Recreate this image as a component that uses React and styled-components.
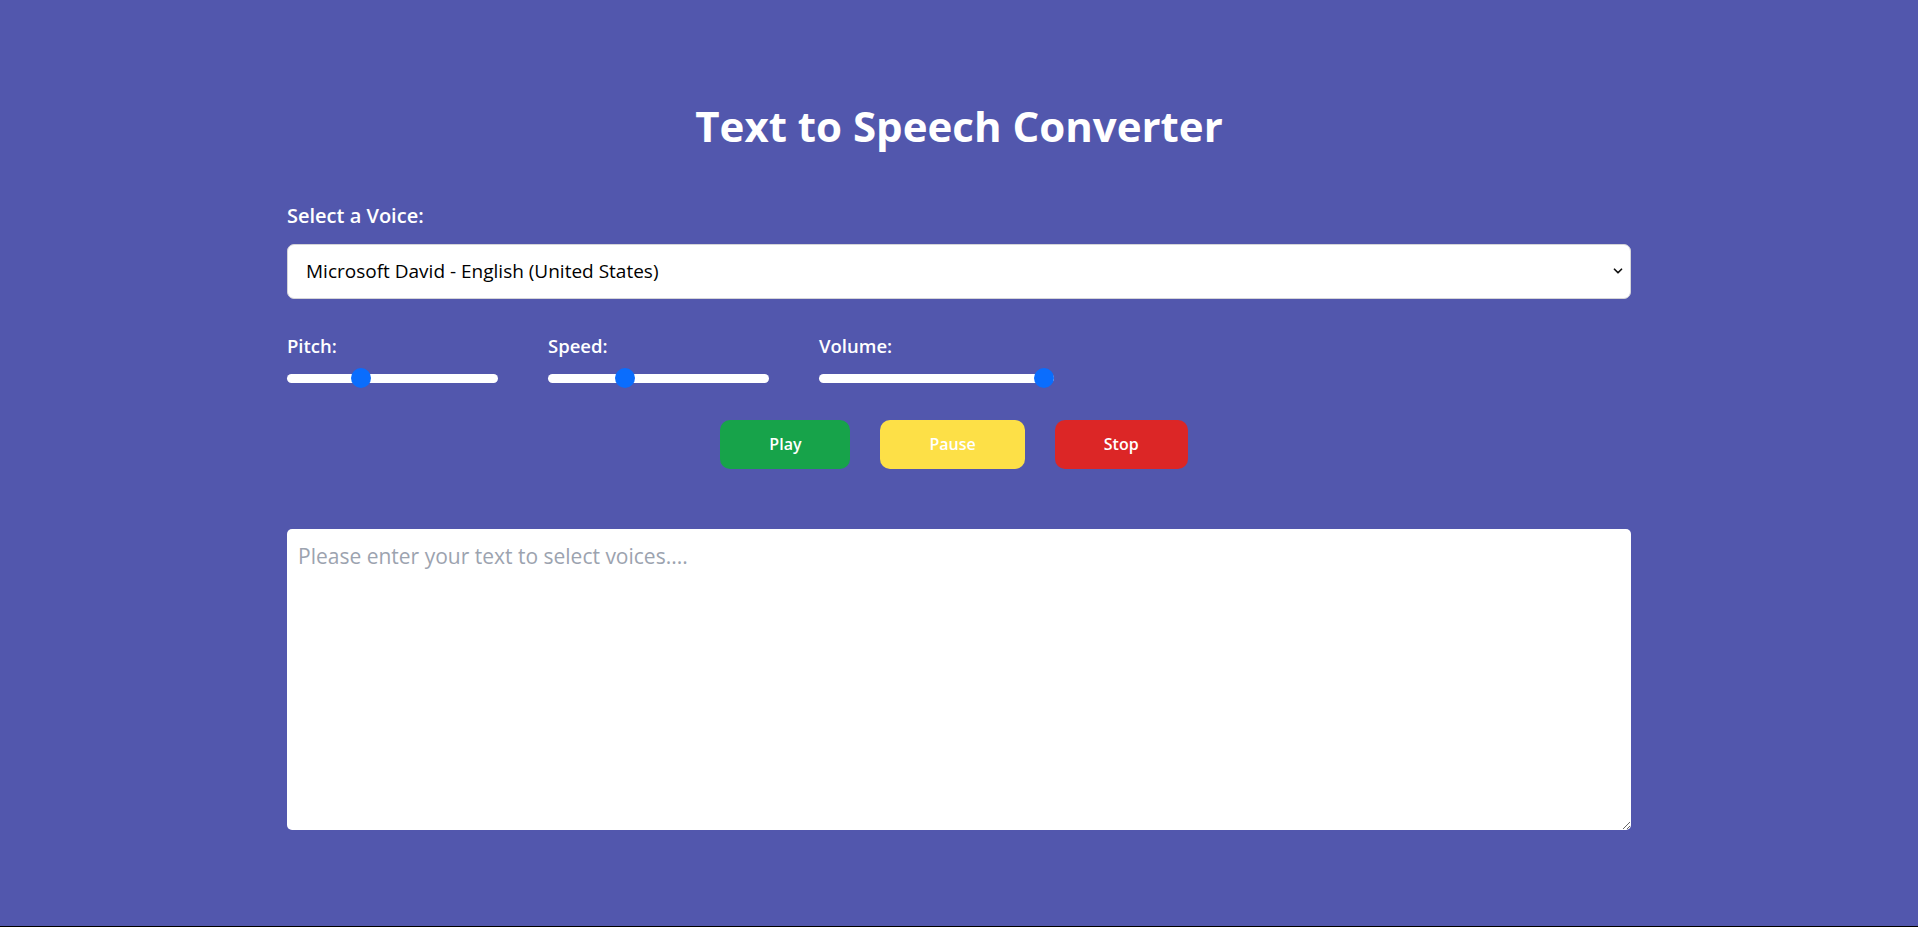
import React, { useState } from "react";
import styled, { createGlobalStyle } from "styled-components";
import { ChevronDown } from "lucide-react";

const GlobalStyle = createGlobalStyle`
  html {
    background: #000;
  }
  body {
    margin: 0;
    font-family: "Open Sans", "Noto Sans", sans-serif;
  }
  * {
    box-sizing: border-box;
  }
`;

const Page = styled.div`
  min-height: calc(100vh - 1px);
  background: #5257ad;
  padding-top: 99px;
`;

const Container = styled.div`
  width: 1344px;
  margin: 0 auto;
  display: flex;
  flex-direction: column;
`;

const Title = styled.h1`
  margin: 0 0 49px;
  text-align: center;
  color: #fff;
  font-size: 42px;
  font-weight: 700;
  line-height: 1.3;
`;

const Label = styled.label`
  display: block;
  color: #fff;
  font-size: ${({ $size }) => $size || 18.5}px;
  font-weight: 600;
  line-height: 1.3;
`;

const SelectWrap = styled.div`
  position: relative;
  margin-top: 15px;
`;

const Select = styled.select`
  width: 100%;
  height: 55px;
  padding: 0 18px;
  border: 1px solid #d4d4d8;
  border-radius: 7px;
  background: #fff;
  color: #000;
  font-family: inherit;
  font-size: 19px;
  appearance: none;
  outline: none;
`;

const Chevron = styled(ChevronDown)`
  position: absolute;
  right: 6px;
  top: 50%;
  transform: translateY(-50%);
  pointer-events: none;
`;

const Controls = styled.div`
  display: flex;
  gap: 50px;
  margin-top: 35px;
`;

const Control = styled.div`
  display: flex;
  flex-direction: column;
  gap: 16px;
  width: ${({ $width }) => $width}px;
`;

const Range = styled.input.attrs({ type: "range" })`
  appearance: none;
  width: 100%;
  height: 9px;
  margin: 0;
  border-radius: 5px;
  background: #fff;
  outline: none;

  &::-webkit-slider-thumb {
    appearance: none;
    width: 20px;
    height: 20px;
    border-radius: 50%;
    background: #0a6dfd;
    cursor: pointer;
  }
`;

const Buttons = styled.div`
  display: flex;
  justify-content: center;
  gap: 30px;
  margin-top: 37px;
  padding-right: 10px;
`;

const Button = styled.button`
  height: 49px;
  padding: 0 49px;
  border: none;
  border-radius: 10px;
  background: ${({ $bg }) => $bg};
  color: #fff;
  font-family: inherit;
  font-size: 16px;
  font-weight: 600;
  cursor: pointer;
`;

const TextArea = styled.textarea`
  width: 100%;
  height: 301px;
  margin-top: 60px;
  padding: 13px 11px;
  border: none;
  border-radius: 5px;
  background: #fff;
  font-family: inherit;
  font-size: 21px;
  outline: none;

  &::placeholder {
    color: #9ca3af;
  }
`;

const voices = ["Microsoft David - English (United States)"];

export default function App() {
  const [voice, setVoice] = useState(voices[0]);
  const [pitch, setPitch] = useState(1);
  const [rate, setRate] = useState(1);
  const [volume, setVolume] = useState(1);
  const [text, setText] = useState("");

  return (
    <>
      <GlobalStyle />
      <Page>
        <Container>
          <Title>Text to Speech Converter</Title>
          <Label $size={20}>Select a Voice:</Label>
          <SelectWrap>
            <Select value={voice} onChange={(e) => setVoice(e.target.value)}>
              {voices.map((v) => (
                <option key={v}>{v}</option>
              ))}
            </Select>
            <Chevron size={14} strokeWidth={3} color="#111" />
          </SelectWrap>

          <Controls>
            <Control $width={211}>
              <Label>Pitch:</Label>
              <Range
                min="0.5"
                max="2"
                step="0.1"
                value={pitch}
                onChange={(e) => setPitch(e.target.value)}
              />
            </Control>
            <Control $width={221}>
              <Label>Speed:</Label>
              <Range
                min="0.5"
                max="2"
                step="0.1"
                value={rate}
                onChange={(e) => setRate(e.target.value)}
              />
            </Control>
            <Control $width={235}>
              <Label>Volume:</Label>
              <Range
                min="0"
                max="1"
                step="0.1"
                value={volume}
                onChange={(e) => setVolume(e.target.value)}
              />
            </Control>
          </Controls>

          <Buttons>
            <Button $bg="#17a34a">Play</Button>
            <Button $bg="#fde047">Pause</Button>
            <Button $bg="#dc2626">Stop</Button>
          </Buttons>

          <TextArea
            placeholder="Please enter your text to select voices...."
            value={text}
            onChange={(e) => setText(e.target.value)}
          />
        </Container>
      </Page>
    </>
  );
}
